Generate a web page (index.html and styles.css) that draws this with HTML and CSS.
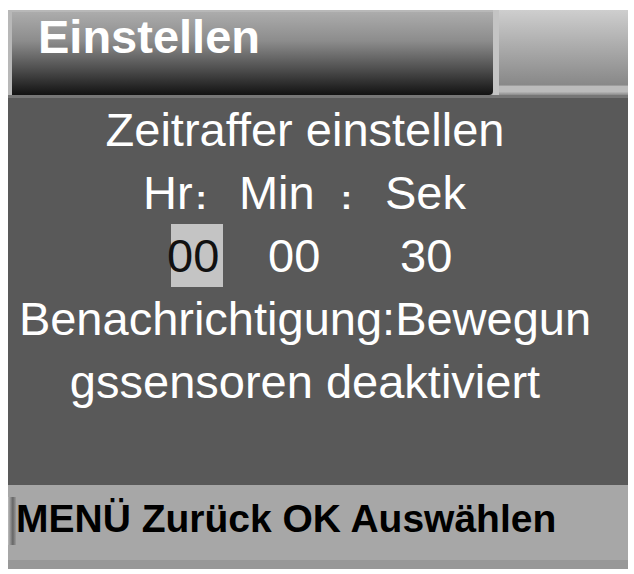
FILE: index.html
```html
<!DOCTYPE html>
<html>

<head>
    <link rel="stylesheet" href="styles.css">
</head>

<body>
    <div class="screen">
        <header class="titlebar">
            <div class="title">Einstellen</div>
            <div class="side"></div>
        </header>
        <main class="content">
            <p class="line">Zeitraffer einstellen</p>
            <!-- labels -->
            <div class="line fields">
                <span class="hr">Hr</span><span class="sep">:</span>
                <span class="min">Min</span><span class="sep sep2">:</span>
                <span class="sek">Sek</span>
            </div>
            <!-- values -->
            <div class="line values">
                <span class="val selected">00</span>
                <span class="val v2">00</span>
                <span class="val v3">30</span>
            </div>
            <p class="line">Benachrichtigung:Bewegun</p>
            <p class="line">gssensoren deaktiviert</p>
        </main>
        <footer class="hints">
            <div class="tab"></div>
            <span>MENÜ Zurück OK Auswählen</span>
        </footer>
    </div>
</body>

</html>
```

FILE: styles.css
```css
* {
    margin: 0;
    padding: 0;
    box-sizing: border-box;
    font-family: "Liberation Sans", Arial, sans-serif;
}

body {
    background-color: #fff;
}

.screen {
    margin: 10px 0 0 8px;
    width: 620px;
    display: flex;
    flex-direction: column;
}

.titlebar {
    height: 85px;
    display: flex;
    background-color: #b8b8b8;
}

.title {
    width: 481px;
    height: 83px;
    margin: 2px 0 0 4px;
    padding: 1px 0 0 26px;
    border-radius: 0 0 4px 0;
    background: linear-gradient(180deg, #acacac 0%, #8c8c8c 35%, #4c4c4c 70%, #121212 100%);
    color: #fff;
    font-size: 47px;
    font-weight: bold;
    line-height: 47px;
}

.side {
    flex: 1;
    border-left: 6px solid #c4c4c4;
    background: linear-gradient(180deg, #cecece 0%, #aaaaaa 45%, #888 88%, #bbb 90%, #bbb 96%, #8a8a8a 100%);
}

.content {
    height: 390px;
    border-top: 3px solid #767676;
    background-color: #595959;
    color: #fff;
    padding-right: 26px;
}

.line {
    height: 63px;
    font-size: 47px;
    line-height: 63px;
    text-align: center;
    white-space: nowrap;
}

.fields,
.values {
    display: flex;
    text-align: left;
}

.fields {
    padding-left: 135px;
    align-items: baseline;
}

.sep {
    font-size: 34px;
    font-weight: bold;
    margin-left: 3px;
}

.min {
    margin-left: 32px;
}

.sep2 {
    margin-left: 26px;
}

.sek {
    margin-left: 33px;
}

.values {
    padding-left: 163px;
}

.val {
    display: inline-block;
    width: 52px;
    height: 63px;
}

.selected {
    background-color: #c4c4c4;
    color: #111;
    text-indent: -4px;
}

.v2 {
    margin-left: 45px;
}

.v3 {
    margin-left: 80px;
}

.hints {
    height: 84px;
    display: flex;
    background-color: #a7a7a7;
    border-bottom: 9px solid #989898;
    color: #000;
    font-size: 39px;
    font-weight: bold;
    line-height: 39px;
    padding-top: 14px;
}

.tab {
    width: 8px;
    height: 48px;
    margin-top: -2px;
    background: linear-gradient(90deg, #bdbdbd, #666 60%, #9a9a9a);
}
```
